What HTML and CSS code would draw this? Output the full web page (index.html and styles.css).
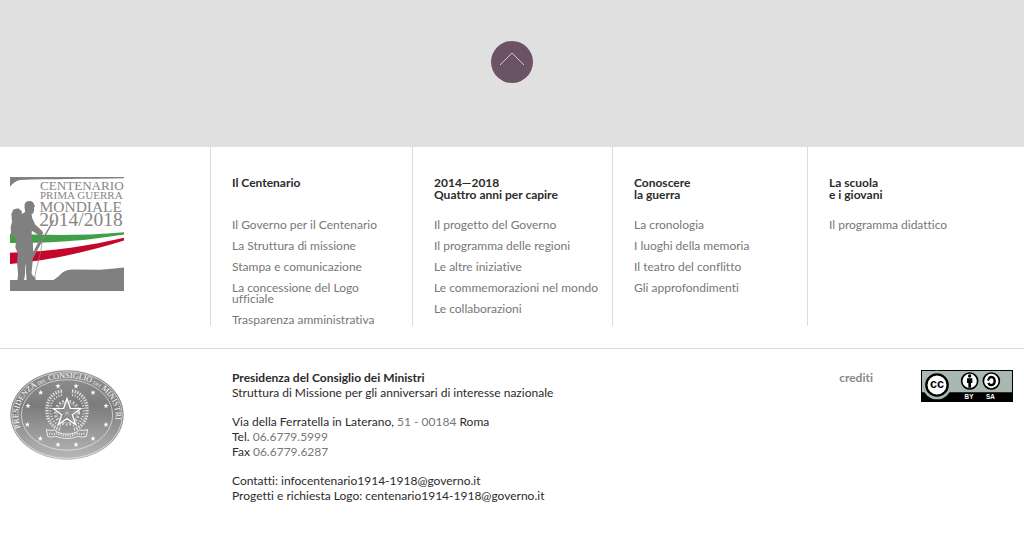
FILE: index.html
```
<!DOCTYPE html>
<html lang="it">
<head>
    <meta charset="UTF-8">
    <meta name="viewport" content="width=device-width, initial-scale=1.0">
    <title>Centenario Prima Guerra Mondiale 2014/2018</title>
    <link rel="stylesheet" href="styles.css">
</head>
<body>
    <div class="back-to-top">
        <button class="top-btn" id="topBtn" type="button" aria-label="Torna su">
            <svg class="top-icon" viewBox="0 0 26 14"><path d="M1 13 13 1l12 12"/></svg>
        </button>
    </div>

    <footer>
        <div class="footer-menu">
            <a class="logo-link" href="#" aria-label="Centenario Prima Guerra Mondiale">
                <svg class="logo" viewBox="31 36 339 339">
                    <path class="grey" d="M31 36H370V40C260 42 150 42 60 45Q42 50 31 65z"/>
                    <path class="green" d="M31 205C120 208 240 212 370 200V207C285 220 200 233 31 232z"/>
                    <path class="red" d="M31 261C160 258 270 240 370 217V225C270 257 150 284 31 295z"/>
                    <path class="grey" d="M31 342H160C188 326 180 315 215 311L300 312 333 309 370 305V375H31z"/>
                    <!-- soldier -->
                    <path class="grey" d="M74 122C74 112 80 107 89 107C98 107 103 112 103 119L106 124 102 127 103 134 100 144 95 147 97 158 106 177 126 196 130 203 122 212 113 207 96 196 95 212 99 232 100 262 98 292 95 322 99 330 107 336 107 343H80L78 305 76 292 76 322 73 343H53L55 326 52 292 54 263 47 246 50 215 39 214 34 205 33 183 37 170 35 146 41 133 55 129 66 137 66 146 76 140z"/>
                    <path class="rifle" d="M161 164 97 276"/>
                    <path class="rifle-butt" d="M122 224 97 275"/>
                    <path class="sling" d="M126 210C130 250 112 288 104 336"/>
                    <g class="logo-text">
                        <text x="120" y="75" font-size="39">CENTENARIO</text>
                        <text x="120" y="102" font-size="33">PRIMA GUERRA</text>
                        <text x="119" y="139" font-size="46">MONDIALE</text>
                        <text x="118" y="182" font-size="58">2014/2018</text>
                    </g>
                </svg>
            </a>
            <section class="menu-col">
                <h2>Il Centenario</h2>
                <ul>
                    <li><a href="#">Il Governo per il Centenario</a></li>
                    <li><a href="#">La Struttura di missione</a></li>
                    <li><a href="#">Stampa e comunicazione</a></li>
                    <li><a href="#">La concessione del Logo ufficiale</a></li>
                    <li><a href="#">Trasparenza amministrativa</a></li>
                </ul>
            </section>
            <section class="menu-col">
                <h2>2014—2018<br>Quattro anni per capire</h2>
                <ul>
                    <li><a href="#">Il progetto del Governo</a></li>
                    <li><a href="#">Il programma delle regioni</a></li>
                    <li><a href="#">Le altre iniziative</a></li>
                    <li><a href="#">Le commemorazioni nel mondo</a></li>
                    <li><a href="#">Le collaborazioni</a></li>
                </ul>
            </section>
            <section class="menu-col">
                <h2>Conoscere<br>la guerra</h2>
                <ul>
                    <li><a href="#">La cronologia</a></li>
                    <li><a href="#">I luoghi della memoria</a></li>
                    <li><a href="#">Il teatro del conflitto</a></li>
                    <li><a href="#">Gli approfondimenti</a></li>
                </ul>
            </section>
            <section class="menu-col">
                <h2>La scuola<br>e i giovani</h2>
                <ul>
                    <li><a href="#">Il programma didattico</a></li>
                </ul>
            </section>
        </div>

        <div class="footer-info">
            <a class="seal-link" href="#" aria-label="Presidenza del Consiglio dei Ministri">
                <svg class="seal" viewBox="30 24 342 270">
                    <defs>
                        <linearGradient id="sealFill" x1="0" y1="0" x2="0" y2="1">
                            <stop offset="0" stop-color="#909090"/>
                            <stop offset="0.4" stop-color="#7c7c7c"/>
                            <stop offset="1" stop-color="#b8b8b8"/>
                        </linearGradient>
                        <path id="star" d="M0-8 2-2 8-2 3 2 5 8 0 4-5 8-3 2-8-2-2-2z"/>
                        <path id="arc" d="M62 197A146 114 0 1 1 340 197"/>
                        <g id="branch">
                            <path class="leaves" d="M186 87C152 92 136 122 142 158C145 180 158 196 180 202"/>
                            <path class="leaves-in" d="M186 99C162 104 147 124 152 156C156 176 168 188 186 192"/>
                        </g>
                    </defs>
                    <ellipse cx="201" cy="159" rx="170" ry="134" fill="url(#sealFill)"/>
                    <ellipse class="ring" cx="201" cy="159" rx="166" ry="130"/>
                    <ellipse class="ring" cx="201" cy="159" rx="137" ry="106"/>
                    <text class="seal-text"><textPath href="#arc">PRESIDENZA <tspan class="small">DEL</tspan> CONSIGLIO <tspan class="small">DEI</tspan> MINISTRI</textPath></text>
                    <g fill="#fff">
                        <use href="#star" x="174" y="72"/>
                        <use href="#star" x="228" y="72"/>
                        <use href="#star" x="122" y="91"/>
                        <use href="#star" x="279" y="91"/>
                        <use href="#star" x="84" y="131"/>
                        <use href="#star" x="318" y="131"/>
                        <use href="#star" x="82" y="187"/>
                        <use href="#star" x="318" y="187"/>
                        <use href="#star" x="121" y="229"/>
                        <use href="#star" x="279" y="229"/>
                        <use href="#star" x="174" y="247"/>
                        <use href="#star" x="228" y="247"/>
                    </g>
                    <use href="#branch"/>
                    <use href="#branch" transform="matrix(-1 0 0 1 402 0)"/>
                    <circle class="gear-teeth" cx="201" cy="152" r="36"/>
                    <circle class="gear" cx="201" cy="152" r="31"/>
                    <path class="emblem-star" d="M201 110 211 139 242 140 217 158 227 188 201 170 175 188 185 158 160 140 191 139z"/>
                    <path class="emblem-lines" d="M201 122V170M230 144 184 159M172 144 218 159M219 178 191 139M183 178 211 139"/>
                    <path class="ribbon" d="M139 203Q152 207 164 204L174 211Q201 222 228 211L238 204Q250 207 263 203L259 223Q247 228 235 223 201 236 167 223 155 228 143 223z"/>
                    <path class="ribbon-lines" d="M148 214Q160 218 170 214Q201 229 232 214Q242 218 254 214"/>
                </svg>
            </a>
            <address class="contacts">
                <p><strong>Presidenza del Consiglio dei Ministri</strong><br>
                Struttura di Missione per gli anniversari di interesse nazionale</p>
                <p>Via della Ferratella in Laterano, <span>51 - 00184</span> Roma<br>
                Tel. <span>06.6779.5999</span><br>
                Fax <span>06.6779.6287</span></p>
                <p>Contatti: <a href="mailto:infocentenario1914-1918@governo.it">infocentenario1914-1918@governo.it</a><br>
                Progetti e richiesta Logo: <a href="mailto:centenario1914-1918@governo.it">centenario1914-1918@governo.it</a></p>
            </address>
            <a class="credits" href="#">crediti</a>
            <a class="license" href="#" aria-label="Creative Commons BY SA">
                <svg class="cc-badge" viewBox="33 24 276 96">
                    <path d="M33 24H309V120H33z"/>
                    <path fill="#a9b8b0" d="M36 27H306V91H36z"/>
                    <circle cx="81" cy="69" r="43" fill="#a9b8b0"/>
                    <circle class="cc-ring" cx="81" cy="69" r="32"/>
                    <text class="cc-text" x="81" y="79">cc</text>
                    <circle class="cc-small" cx="179" cy="57" r="24"/>
                    <circle cx="179" cy="42" r="5"/>
                    <path d="M171 49H187V63H183V77H175V63H171z"/>
                    <circle class="cc-small" cx="244" cy="57" r="24"/>
                    <path class="cc-arrow" d="M236 51C239 42 254 43 254 57C254 71 239 73 235 63"/>
                    <path d="M230 52H241L235 58z"/>
                    <text class="cc-label" x="177" y="112">BY</text>
                    <text class="cc-label" x="241" y="112">SA</text>
                </svg>
            </a>
        </div>
    </footer>

    <script>
        // Scroll back to the top of the page
        document.getElementById('topBtn').addEventListener('click', function() {
            window.scrollTo({ top: 0, behavior: 'smooth' });
        });
    </script>
</body>
</html>
```
FILE: styles.css
```
* {
    margin: 0;
    padding: 0;
    box-sizing: border-box;
}

body {
    background-color: #fff;
    font-family: Lato, 'Open Sans', sans-serif;
    font-size: 12px;
    font-variant-ligatures: none;
    color: #2b2b2b;
}

a {
    color: inherit;
    text-decoration: none;
}

svg {
    display: block;
}

/* Back to top */
.back-to-top {
    display: flex;
    justify-content: center;
    padding: 41px 0 64px;
    background-color: #e0e0e0;
}

.top-btn {
    display: flex;
    justify-content: center;
    align-items: center;
    width: 42px;
    height: 42px;
    padding-bottom: 6px;
    border: none;
    border-radius: 50%;
    background-color: #6b5366;
    cursor: pointer;
}

.top-icon {
    width: 26px;
    height: 14px;
    fill: none;
    stroke: #d5ccd3;
    stroke-width: 1;
}

/* Menu columns */
.footer-menu {
    display: grid;
    grid-template-columns: 210fr 202fr 200fr 195fr 217fr;
    padding-bottom: 22px;
    border-bottom: 1px solid #dcdcdc;
}

.logo-link {
    padding: 30px 0 0 10px;
}

.logo {
    width: 114px;
    height: 114px;
}

.grey {
    fill: #808080;
}

.green {
    fill: #41a047;
}

.red {
    fill: #c4072b;
}

.rifle,
.rifle-butt,
.sling {
    fill: none;
    stroke: #808080;
    stroke-width: 4;
}

.rifle-butt {
    stroke-width: 8;
}

.sling {
    stroke-width: 2;
}

.logo-text {
    font-family: 'Liberation Serif', serif;
    fill: #868686;
}

.menu-col {
    padding: 30px 12px 0 21px;
    border-left: 1px solid #dcdcdc;
}

.menu-col h2 {
    min-height: 24px;
    margin-bottom: 18px;
    font-size: 12px;
    line-height: 12px;
    font-weight: bold;
}

.menu-col ul {
    list-style: none;
}

.menu-col li {
    margin-bottom: 10px;
    line-height: 11px;
    color: #777;
}

.menu-col li:last-child {
    margin-bottom: 1px;
}

/* Contacts */
.footer-info {
    display: flex;
    align-items: flex-start;
    padding: 21px 11px 16px 10px;
}

.seal-link {
    width: 222px;
}

.seal {
    width: 114px;
    height: 90px;
}

.ring {
    fill: none;
    stroke: #eee;
    stroke-width: 2;
}

.seal-text {
    font-family: 'Liberation Serif', serif;
    font-size: 24px;
    fill: #fff;
}

.small {
    font-size: 14px;
}

.leaves,
.leaves-in {
    fill: none;
    stroke: #e2e2e2;
    stroke-width: 10;
    stroke-dasharray: 4 4;
}

.leaves-in {
    stroke-width: 6;
    stroke-dasharray: 3 5;
}

.gear-teeth {
    fill: none;
    stroke: #ddd;
    stroke-width: 6;
    stroke-dasharray: 5 6;
}

.gear {
    fill: #858585;
    stroke: #ddd;
    stroke-width: 2;
}

.emblem-star {
    fill: #858585;
    stroke: #fff;
    stroke-width: 4;
}

.emblem-lines {
    fill: none;
    stroke: #ddd;
    stroke-width: 1;
}

.ribbon {
    fill: #999;
    stroke: #eee;
    stroke-width: 3;
}

.ribbon-lines {
    fill: none;
    stroke: #eee;
    stroke-width: 6;
    stroke-dasharray: 3 4;
}

.contacts {
    flex: 1;
    font-style: normal;
    line-height: 15px;
}

.contacts p {
    margin-bottom: 14px;
}

.contacts span {
    color: #777;
}

.credits {
    margin-right: 48px;
    font-weight: bold;
    line-height: 15px;
    color: #8a8a8a;
}

.cc-badge {
    width: 92px;
    height: 32px;
}

.cc-ring {
    fill: #fff;
    stroke: #000;
    stroke-width: 7;
}

.cc-small {
    fill: #fff;
    stroke: #000;
    stroke-width: 5;
}

.cc-arrow {
    fill: none;
    stroke: #000;
    stroke-width: 7;
}

.cc-text {
    font-family: 'Liberation Sans', sans-serif;
    font-size: 38px;
    font-weight: bold;
    text-anchor: middle;
}

.cc-label {
    font-family: 'Liberation Sans', sans-serif;
    font-size: 19px;
    font-weight: bold;
    text-anchor: middle;
    fill: #fff;
}
```
